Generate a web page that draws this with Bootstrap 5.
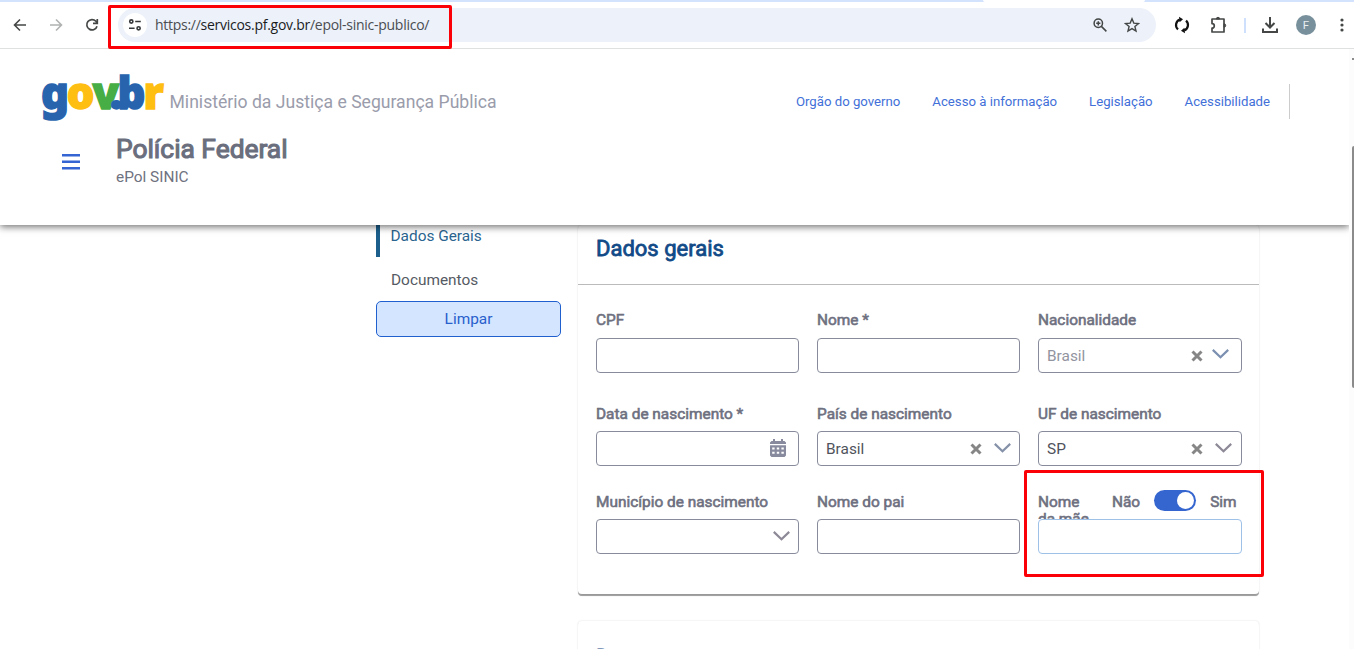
<!DOCTYPE html>
<html lang="pt-BR">
<head>
<meta charset="utf-8">
<title>ePol SINIC</title>
<link href="https://cdn.jsdelivr.net/npm/bootstrap@5.3.0/dist/css/bootstrap.min.css" rel="stylesheet">
<style>
  body { font-family: Roboto, sans-serif; font-size: 15.4px; line-height: 18px; height: 649px; color: #555a64; background: #fff; }
  .browser { height: 49px; border-bottom: 1px solid #dfe0e0; background: linear-gradient(#d3e3fd 2px, #fff 2px); padding: 2px 0 0 12px; }
  .browser svg { display: block; flex: none; }
  .omnibox { width: 1038px; height: 34px; margin-left: 18px; background: #ecf1fa; border-radius: 17px; }
  .site-chip { width: 24px; height: 24px; margin-left: 5px; background: #fff; }
  .url { font: 14px/20px "Open Sans", sans-serif; color: #4a4d51; letter-spacing: -.27px; margin-left: 8px; }
  .url b { font-weight: 400; color: #1b1c1e; }
  .tool-rule { width: 2px; height: 15px; background: #cfe0fc; margin-left: 16px; }
  .avatar-f { width: 20px; height: 20px; background: #78909c; color: #e9eef0; font-size: 11.5px; margin-left: 17px; }
  .site-head { height: 176px; width: 1349px; z-index: 3; box-shadow: 0 2px 7px rgba(0,0,0,.55); clip-path: inset(0 0 -14px 0); padding: 0 59px 0 42px; background: #fff; }
  .logo { display: block; overflow: visible; }
  .logo tspan { stroke-width: 1.4px; }
  .c-blue { fill: #2864ae; stroke: #2864ae; }
  .c-gold { fill: #ffbe12; stroke: #ffbe12; }
  .c-green { fill: #47ad45; stroke: #47ad45; }
  .ministry { font-size: 17.6px; color: #9a9cab; margin: 10px 0 0 3.500px; }
  .top-links { font-size: 13.2px; gap: 32px; padding-top: 10px; }
  .top-links a { color: #4270d8; }
  .v-rule { width: 1px; height: 35px; background: #ccc; margin-left: 19px; }
  .faux-bold { -webkit-text-stroke: .8px currentColor; }
  .org { font-size: 26.4px; line-height: 30px; color: #6a6e7d; letter-spacing: -.03px; -webkit-text-stroke: 1.1px currentColor; }
  .sub { color: #6f7280; line-height: 18px; }
  .page { width: 1349px; padding-left: 376px; gap: 17px; }
  .side { width: 185px; }
  .side-on { height: 32px; border-left: 4px solid #1c5f8c; padding: 2px 0 0 10.5px; color: #2a648f; }
  .side-off { padding-left: 15px; margin-top: 14px; color: #555a63; }
  .btn-clear { height: 36px; margin-top: 12px; border: 1px solid #1f5fce; background: #d4e5ff; color: #2860cc; border-radius: 5px; font-size: 15.4px; line-height: 18px; }
  .panel { width: 681px; border-radius: 4px; background: #fff; box-shadow: 0 1px 0 #a2a2a2, 0 2px 1px -1px rgba(0,0,0,.2), 0 0 2px rgba(0,0,0,.14); }
  .panel-a { height: 370px; border-bottom: 1px solid #999; }
  .panel-b { height: 60px; margin-top: 26px; padding: 23.500px 18px; }
  .panel h2 { font-size: 22px; line-height: 26px; color: #114a87; }
  .panel-title { height: 60px; padding: 11px 18px 0; border-bottom: 1px solid #bbbbbd; }
  .form-area { display: grid; grid-template-columns: 203px 203px 204px; column-gap: 18px; grid-template-rows: 93px 88px 60px; padding: 26px 18px 0; }
  .fl { color: #6e7080; -webkit-text-stroke: .6px currentColor; height: 27px; }
  .mid .fl { height: 26px; margin-top: 1px; }
  .box { height: 35px; border: 1px solid #888b9c; border-radius: 4px; background: #fff; padding: 0 12px 0 8px; color: #50535c; }
  .box svg { display: block; }
  .box.has-menu { padding-right: 8.500px; }
  .mother { height: 26px; margin-top: 1px; }
  .mother .wraplabel { width: 56px; height: 26px; line-height: 17px; padding-top: .5px; overflow: hidden; }
  .mother span, .mother .wraplabel { -webkit-text-stroke: .6px currentColor; color: #6e7080; }
  .box.is-focus { border-color: #9ec1e8; }
  .toggle { width: 42px; height: 21px; border-radius: 11px; background: #3565cf; padding: 2px; margin: -3px 14px 0; }
  .knob { width: 17px; height: 17px; background: #fff; }
  .mark-box { border: 3px solid #fb0007; border-radius: 2px; z-index: 5; }
  .mark-url { left: 108px; top: 5px; width: 344px; height: 44px; }
  .mark-mother { left: 1024px; top: 470px; width: 240px; height: 107px; }
  .scroll-track { right: 0; top: 49px; width: 5px; height: 600px; background: #fcfcfc; }
  .scroll-up { right: 0; top: 58px; width: 2px; height: 2px; background: #8b8b8b; }
  .scroll-thumb { right: 0; top: 146px; width: 2px; height: 242px; background: #8b8b8b; border-radius: 2px 0 0 2px; }
  .tab-edge { left: 983px; top: 0; width: 162px; height: 2px; background: #fff; border-radius: 0 0 3px 3px; }
</style>
</head>
<body class="position-relative overflow-hidden m-0">

<div class="browser d-flex align-items-center">
  <svg width="16" height="16" viewBox="0 0 16 16" fill="none" stroke="#444746" stroke-width="1.6"><path d="M14 8H3M8 2.500 2.500 8 8 13.500"/></svg>
  <svg style="margin-left:20px" width="16" height="16" viewBox="0 0 16 16" fill="none" stroke="#b0b2b2" stroke-width="1.600"><path d="M2 8h11M8 2.500 13.500 8 8 13.500"/></svg>
  <svg style="margin-left:20px" width="16" height="16" viewBox="0 0 16 16" fill="none" stroke="#444746" stroke-width="1.7"><path d="M13 9.200A5.200 5.200 0 1 1 11.900 4.300L13.300 5.800M13.300 2v4.300H9"/></svg>
  <div class="omnibox d-flex align-items-center">
    <div class="site-chip rounded-circle d-flex align-items-center justify-content-center">
      <svg width="14" height="14" viewBox="0 0 14 14" fill="none" stroke="#36393b" stroke-width="1.600"><circle cx="3.300" cy="3.500" r="1.600"/><path d="M7.200 3.500h5.600M1 10.300h5.600"/><circle cx="10.600" cy="10.300" r="1.600"/></svg>
    </div>
    <div class="url text-nowrap">https://<b>servicos.pf.gov.br</b>/epol-sinic-publico/</div>
    <svg class="ms-auto" width="16" height="16" viewBox="0 0 16 16" fill="none" stroke="#444746" stroke-width="1.500"><circle cx="6.300" cy="6.300" r="4.200"/><path d="m9.400 9.400 5 5M4.200 6.300h4.200M6.300 4.200v4.200"/></svg>
    <svg style="margin:0 16px 0 16px" width="16" height="16" viewBox="0 0 16 16" fill="none" stroke="#444746" stroke-width="1.400"><path d="m8 1.800 1.800 4.300 4.700.4-3.600 3 1.100 4.600-4-2.500-4 2.500 1.100-4.600-3.600-3 4.700-.4z"/></svg>
  </div>
  <svg style="margin-left:18px" width="16" height="18" viewBox="0 0 16 18" fill="none" stroke="#111" stroke-width="2.200"><path d="M4 13.400A5.800 5.800 0 0 1 5.800 3.600M12 4.600A5.800 5.800 0 0 1 10.200 14.400"/><path d="M5 .8 9 3.200 5.600 6.200zM11 17.200 7 14.800 10.400 11.800z" fill="#111" stroke="none"/></svg>
  <svg style="margin-left:20px" width="18" height="18" viewBox="0 0 18 18" fill="none" stroke="#444746" stroke-width="1.700" stroke-linejoin="round"><path d="M2 3h12v13H2v-3.800a2.300 2.300 0 0 0 0-4.600z"/><path d="M6.300 3a1.700 1.700 0 0 1 3.400 0zM14 7.800a1.700 1.700 0 0 1 0 3.400z" fill="#444746" stroke-width="1"/></svg>
  <div class="tool-rule"></div>
  <svg style="margin-left:15px" width="18" height="18" viewBox="0 0 18 18" fill="none" stroke="#444746" stroke-width="2"><path d="M9 1v10M4.500 7 9 11.500 13.500 7M2 12.500V16h14v-3.500"/></svg>
  <div class="avatar-f rounded-circle d-flex align-items-center justify-content-center">F</div>
  <svg style="margin-left:24px" width="4" height="16" viewBox="0 0 4 16" fill="#444746"><circle cx="2" cy="3" r="1.600"/><circle cx="2" cy="8" r="1.600"/><circle cx="2" cy="13" r="1.600"/></svg>
</div>

<header class="site-head position-relative">
  <div class="d-flex align-items-center" style="padding-top:22px">
    <svg class="logo" width="124" height="52" viewBox="0 0 124 52" font-family="Noto Sans, sans-serif" font-weight="900" font-size="43.500">
      <text y="37.500"><tspan x="-1" class="c-blue">g</tspan><tspan x="24.800" class="c-gold">o</tspan><tspan x="50.500" class="c-green">v</tspan><tspan x="68" class="c-blue">.</tspan><tspan x="75.500" class="c-blue">b</tspan><tspan x="101.500" class="c-gold">r</tspan></text>
    </svg>
    <div class="ministry text-nowrap">Ministério da Justiça e Segurança Pública</div>
    <nav class="top-links d-flex ms-auto text-nowrap">
      <a class="text-decoration-none">Orgão do governo</a><a class="text-decoration-none">Acesso à informação</a><a class="text-decoration-none">Legislação</a><a class="text-decoration-none">Acessibilidade</a>
    </nav>
    <div class="v-rule mt-2"></div>
  </div>
  <div class="d-flex" style="padding:11px 0 0 20px">
    <svg style="margin-top:20px" width="18" height="16" viewBox="0 0 18 16" fill="#3565d3"><path d="M0 0h18v2.500H0zM0 6.500h18V9H0zM0 13h18v2.500H0z"/></svg>
    <div style="margin-left:36px">
      <div class="org">Polícia Federal</div>
      <div class="sub" style="margin-top:4px">ePol SINIC</div>
    </div>
  </div>
</header>

<main class="page d-flex">
  <aside class="side">
    <div class="side-on">Dados Gerais</div>
    <div class="side-off">Documentos</div>
    <button class="btn-clear btn w-100 p-0 d-block">Limpar</button>
  </aside>
  <section>
    <div class="panel panel-a">
      <div class="panel-title"><h2 class="faux-bold m-0 fw-normal">Dados gerais</h2></div>
      <div class="form-area">
        <div><div class="fl">CPF</div><div class="box"></div></div>
        <div><div class="fl">Nome *</div><div class="box"></div></div>
        <div><div class="fl">Nacionalidade</div>
          <div class="box d-flex align-items-center" style="color:#92949f"><span>Brasil</span>
            <svg class="ms-auto" width="12" height="12" viewBox="0 0 12 12" stroke="#868686" stroke-width="3"><path d="m1.500 1.500 9 9m0-9-9 9"/></svg>
            <svg style="margin:-3px 0 0 9px" width="17" height="10" viewBox="0 0 17 10" fill="none" stroke="#7b8fb0" stroke-width="2.200"><path d="m.8.9 7.700 7.300L16.200.9"/></svg></div></div>
        <div class="mid"><div class="fl">Data de nascimento *</div>
          <div class="box d-flex align-items-center justify-content-end">
            <svg style="margin-top:-1px" width="16" height="18" viewBox="0 0 16 18" fill="#888b9e"><path fill-rule="evenodd" d="M3 0h2v2h6V0h2v2h1.500L16 3.500V5H0V3.500L1.500 2H3zM0 6.200h16V16.500L14.500 18h-13L0 16.500zM2.200 8.400v2h2.400v-2zm4.600 0v2h2.400v-2zm4.600 0v2h2.400v-2zM2.200 12.700v2h2.400v-2zm4.600 0v2h2.400v-2zm4.600 0v2h2.400v-2z"/></svg></div></div>
        <div class="mid"><div class="fl">País de nascimento</div>
          <div class="box has-menu d-flex align-items-center"><span>Brasil</span>
            <svg class="ms-auto" width="12" height="12" viewBox="0 0 12 12" stroke="#868686" stroke-width="3"><path d="m1.500 1.500 9 9m0-9-9 9"/></svg>
            <svg style="margin:-2px 0 0 11.500px" width="17" height="10" viewBox="0 0 17 10" fill="none" stroke="#8591a8" stroke-width="2.200"><path d="m.8.9 7.700 7.300L16.200.9"/></svg></div></div>
        <div class="mid"><div class="fl">UF de nascimento</div>
          <div class="box has-menu d-flex align-items-center"><span>SP</span>
            <svg class="ms-auto" width="12" height="12" viewBox="0 0 12 12" stroke="#868686" stroke-width="3"><path d="m1.500 1.500 9 9m0-9-9 9"/></svg>
            <svg style="margin:-2px .5px 0 12px" width="17" height="10" viewBox="0 0 17 10" fill="none" stroke="#8e8997" stroke-width="2.200"><path d="m.8.9 7.700 7.300L16.200.9"/></svg></div></div>
        <div class="mid"><div class="fl">Município de nascimento</div>
          <div class="box has-menu d-flex align-items-center justify-content-end">
            <svg style="margin-top:-2px" width="17" height="10" viewBox="0 0 17 10" fill="none" stroke="#8e8997" stroke-width="2.200"><path d="m.8.9 7.700 7.300L16.200.9"/></svg></div></div>
        <div class="mid"><div class="fl">Nome do pai</div><div class="box"></div></div>
        <div>
          <div class="mother d-flex align-items-start">
            <div class="wraplabel">Nome da mãe</div>
            <span style="margin-left:18px">Não</span><div class="toggle d-flex justify-content-end"><div class="knob rounded-circle"></div></div><span>Sim</span>
          </div>
          <div class="box is-focus"></div>
        </div>
      </div>
    </div>
    <div class="panel panel-b"><h2 class="faux-bold m-0 fw-normal">Documentos</h2></div>
  </section>
</main>

<div class="position-absolute tab-edge"></div>
<div class="position-absolute scroll-track"></div>
<div class="position-absolute scroll-up"></div>
<div class="position-absolute scroll-thumb"></div>
<div class="position-absolute mark-box mark-url"></div>
<div class="position-absolute mark-box mark-mother"></div>
<script src="https://cdn.jsdelivr.net/npm/bootstrap@5.3.0/dist/js/bootstrap.bundle.min.js"></script>
</body>
</html>
